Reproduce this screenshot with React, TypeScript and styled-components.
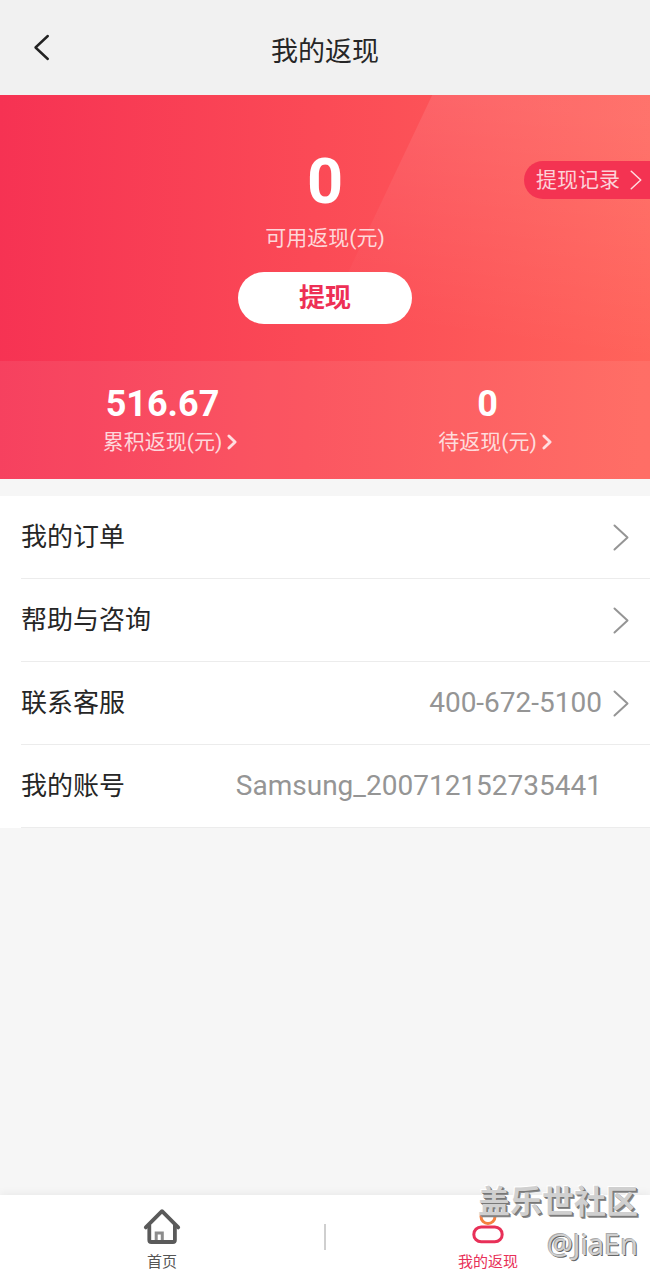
import React from "react";
import styled, { createGlobalStyle } from "styled-components";

const GlobalStyle = createGlobalStyle`
  * { box-sizing: border-box; }
  body {
    margin: 0;
    background: #f6f6f6;
    font-family: Roboto, "Noto Sans CJK SC", sans-serif;
    color: #262626;
  }
  a { color: inherit; text-decoration: none; }
  button { font: inherit; color: inherit; border: 0; background: none; padding: 0; cursor: pointer; }
  svg { display: block; flex: none; }
`;

const Page = styled.div`
  position: relative;
  display: flex;
  flex-direction: column;
  min-height: 100vh;
`;

const Header = styled.header`
  display: grid;
  grid-template-columns: 80px 1fr 80px;
  align-items: center;
  height: 95px;
  background: #f1f1f1;
`;

const BackButton = styled.button`
  display: flex;
  align-items: center;
  height: 48px;
  padding-left: 33px;
`;

const Title = styled.h1`
  margin: 0;
  padding-top: 8px;
  font-size: 27px;
  line-height: 40px;
  font-weight: 400;
  text-align: center;
`;

const Hero = styled.section`
  position: relative;
  isolation: isolate;
  background: linear-gradient(92deg, #f63253 0%, #fb4a56 48%, #ff645b 100%);
  color: #fff;

  &::before {
    content: "";
    position: absolute;
    inset: 0;
    z-index: -1;
    clip-path: polygon(66.5% 0, 100% 0, 100% 100%, 38.5% 100%);
    background: linear-gradient(188deg, rgba(255, 255, 255, 0.1) 6%, rgba(255, 255, 255, 0) 56%);
  }
`;

const Balance = styled.div`
  display: grid;
  grid-template-columns: 1fr auto 1fr;
  height: 266px;
  padding-top: 52px;
`;

const BalanceMain = styled.div`
  grid-column: 2;
  display: flex;
  flex-direction: column;
  align-items: center;
`;

const BalanceAmount = styled.strong`
  font-size: 63px;
  line-height: 70px;
  font-weight: 700;
`;

const Caption = styled.span`
  font-size: 21px;
  line-height: 32px;
  color: rgba(255, 255, 255, 0.78);
  white-space: nowrap;
`;

const BalanceCaption = styled(Caption)`
  margin: 5px 0 18px;
`;

const WithdrawButton = styled.button`
  width: 174px;
  height: 52px;
  border-radius: 26px;
  background: #fff;
  color: #ee2f55;
  font-size: 26px;
  line-height: 40px;
  font-weight: 700;
`;

const HistoryLink = styled.a`
  justify-self: end;
  display: flex;
  align-items: center;
  gap: 10px;
  height: 38px;
  margin-top: 14px;
  padding: 0 8px 0 12px;
  border-radius: 19px 0 0 19px;
  background: #f43352;
`;

const Stats = styled.div`
  display: grid;
  grid-template-columns: 1fr 1fr;
  height: 118px;
  padding-top: 22px;
  background: rgba(255, 255, 255, 0.07);
`;

const Stat = styled.a`
  display: flex;
  flex-direction: column;
`;

const StatAmount = styled.strong`
  font-size: 36px;
  line-height: 43px;
  font-weight: 700;
  text-align: center;
`;

const StatLabel = styled.span`
  display: grid;
  grid-template-columns: 1fr auto 1fr;
  align-items: center;
  column-gap: 5px;

  > :first-child { grid-column: 2; }
`;

const Menu = styled.nav`
  margin-top: 17px;
  background: #fff;
`;

const MenuRow = styled.a`
  display: flex;
  align-items: center;
  height: 83px;
  margin-left: 21px;
  padding-right: 21px;
  border-bottom: 1px solid #ececec;
`;

const MenuLabel = styled.span`
  flex: 1;
  font-size: 26px;
  line-height: 40px;
`;

const MenuValue = styled.span`
  font-size: 28px;
  line-height: 40px;
  color: #959595;
`;

const MenuArrow = styled.span`
  display: flex;
  justify-content: flex-end;
  width: 27px;
`;

const TabBar = styled.nav`
  display: grid;
  grid-template-columns: 1fr 2px 1fr;
  align-items: center;
  height: 83px;
  margin-top: auto;
  background: #fff;
  box-shadow: 0 -2px 8px rgba(0, 0, 0, 0.05);
`;

const Tab = styled.a<{ $active?: boolean }>`
  display: flex;
  flex-direction: column;
  align-items: center;
  gap: 7px;
  padding-top: 8px;
  font-size: 15px;
  line-height: 22px;
  color: ${(p) => (p.$active ? "#e83058" : "#555")};
`;

const TabDivider = styled.span`
  height: 26px;
  background: #cfcfcf;
`;

const Watermark = styled.div`
  position: absolute;
  right: 12px;
  bottom: 13px;
  display: flex;
  flex-direction: column;
  align-items: flex-end;
  color: #d0d0d0;
  pointer-events: none;
`;

const WatermarkSite = styled.span`
  font-size: 32px;
  line-height: 42px;
  font-weight: 700;
  text-shadow: 1px 1px 0 #777, 2px 2px 0 #8a8a8a, -1px -1px 0 #fff;
`;

const WatermarkUser = styled.span`
  font-family: "Open Sans", sans-serif;
  font-size: 29px;
  line-height: 42px;
  text-shadow: 1px 1px 0 #666, -1px -1px 0 #aaa;
`;

type ChevronProps = { width: number; height: number; color: string; stroke: number };

function Chevron({ width, height, color, stroke }: ChevronProps) {
  const inset = stroke / 2 + 0.5;
  return (
    <svg width={width} height={height} viewBox={`0 0 ${width} ${height}`} aria-hidden="true">
      <path
        d={`M${inset} ${inset}L${width - inset} ${height / 2}L${inset} ${height - inset}`}
        fill="none"
        stroke={color}
        strokeWidth={stroke}
        strokeLinecap="round"
        strokeLinejoin="round"
      />
    </svg>
  );
}

const HomeIcon = () => (
  <svg width="38" height="36" viewBox="0 0 38 36" fill="none" aria-hidden="true">
    <path d="M2.8 19.4L19 3.2L35.2 19.4" stroke="#5a5a5a" strokeWidth="3.8" strokeLinecap="round" strokeLinejoin="round" />
    <path d="M6.3 17V32Q6.3 34 8.3 34H29.9Q31.9 34 31.9 32V17" stroke="#5a5a5a" strokeWidth="3.8" />
    <path d="M13.2 32V25H19.3V32" stroke="#8c8c8c" strokeWidth="3" />
  </svg>
);

const PersonIcon = () => (
  <svg width="34" height="36" viewBox="0 0 34 36" fill="none" aria-hidden="true">
    <circle cx="17" cy="8.5" r="7" stroke="#f5813f" strokeWidth="3" />
    <rect x="2.8" y="19" width="28.4" height="14.8" rx="7.4" stroke="#e83058" strokeWidth="3" />
  </svg>
);

const stats = [
  { amount: "516.67", label: "累积返现(元)" },
  { amount: "0", label: "待返现(元)" },
];

const rows = [
  { label: "我的订单", arrow: true },
  { label: "帮助与咨询", arrow: true },
  { label: "联系客服", value: "400-672-5100", arrow: true },
  { label: "我的账号", value: "Samsung_200712152735441", arrow: false },
];

export default function App() {
  return (
    <Page>
      <GlobalStyle />
      <Header>
        <BackButton aria-label="返回">
          <svg width="17" height="28" viewBox="0 0 17 28" aria-hidden="true">
            <path d="M14.8 2L2.5 13.5L14.8 25" fill="none" stroke="#222" strokeWidth="2.4" strokeLinecap="round" strokeLinejoin="round" />
          </svg>
        </BackButton>
        <Title>我的返现</Title>
      </Header>

      <Hero>
        <Balance>
          <BalanceMain>
            <BalanceAmount>0</BalanceAmount>
            <BalanceCaption>可用返现(元)</BalanceCaption>
            <WithdrawButton>提现</WithdrawButton>
          </BalanceMain>
          <HistoryLink href="#history">
            <Caption>提现记录</Caption>
            <Chevron width={12} height={20} color="#ffdde0" stroke={1.5} />
          </HistoryLink>
        </Balance>
        <Stats>
          {stats.map((s) => (
            <Stat key={s.label} href="#cashback">
              <StatAmount>{s.amount}</StatAmount>
              <StatLabel>
                <Caption>{s.label}</Caption>
                <Chevron width={10} height={16} color="#ffdde0" stroke={2.8} />
              </StatLabel>
            </Stat>
          ))}
        </Stats>
      </Hero>

      <Menu>
        {rows.map((r) => (
          <MenuRow key={r.label} href="#menu">
            <MenuLabel>{r.label}</MenuLabel>
            {r.value && <MenuValue>{r.value}</MenuValue>}
            <MenuArrow>{r.arrow && <Chevron width={16} height={27} color="#959595" stroke={2} />}</MenuArrow>
          </MenuRow>
        ))}
      </Menu>

      <TabBar>
        <Tab href="#home">
          <HomeIcon />
          首页
        </Tab>
        <TabDivider />
        <Tab href="#cashback" $active>
          <PersonIcon />
          我的返现
        </Tab>
      </TabBar>

      <Watermark>
        <WatermarkSite>盖乐世社区</WatermarkSite>
        <WatermarkUser>@JiaEn</WatermarkUser>
      </Watermark>
    </Page>
  );
}
